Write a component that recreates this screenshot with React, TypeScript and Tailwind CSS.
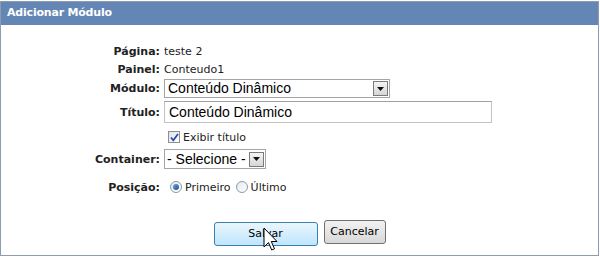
import React from 'react';

const labelCls = "text-right font-bold text-[11px] text-[#222] leading-none";

const DropArrow: React.FC = () => (
  <span className="flex h-[15px] w-[15px] items-center justify-center border border-[#7a7a7a] bg-gradient-to-b from-[#f4f4f4] to-[#d6d6d6]">
    <svg width="7" height="4" viewBox="0 0 7 4">
      <path d="M0 0h7L3.5 4z" fill="#111" />
    </svg>
  </span>
);

const Radio: React.FC<{ checked?: boolean }> = ({ checked }) => (
  <span className="flex h-[12px] w-[12px] items-center justify-center rounded-full border border-[#8c9aa8] bg-gradient-to-br from-[#e6e9ec] to-[#ffffff]">
    {checked && <span className="h-[6px] w-[6px] rounded-full bg-gradient-to-br from-[#6fa0dc] to-[#1d4f9c]" />}
  </span>
);

const Cursor: React.FC = () => (
  <svg className="absolute left-[49px] top-[7px]" width="16" height="25" viewBox="0 0 16 25">
    <path d="M1 1v19l4.5-4.5 3.2 7.5 2.8-1.2-3.2-7.3H14z" fill="#fff" stroke="#000" strokeWidth="1" strokeLinejoin="round" />
  </svg>
);

export default function App() {
  return (
    <div className="h-[257px] w-[600px] bg-white pt-[1px]" style={{ fontFamily: '"DejaVu Sans", Tahoma, sans-serif' }}>
      <div className="h-[255px] w-[599px] border border-[#8d9cb0] bg-white">
        <div className="flex h-[23px] items-center bg-[#6386b4] pl-[6px] text-[11px] font-bold tracking-[-0.2px] text-white">
          Adicionar Módulo
        </div>

        <div className="grid grid-cols-[159px_1fr] items-center gap-x-[4px] pt-[21px]">
          <div className={labelCls}>Página:</div>
          <div className="text-[11px] leading-none text-[#222]">teste 2</div>

          <div className={`${labelCls} mt-[7px]`}>Painel:</div>
          <div className="mt-[7px] text-[11px] leading-none text-[#222]">Conteudo1</div>

          <div className={`${labelCls} mt-[4px]`}>Módulo:</div>
          <div className="mt-[4px] flex h-[19px] w-[226px] items-center justify-between border border-[#a5a5a5] pl-[3px] pr-[1px]">
            <span className="text-[14px] text-black" style={{ fontFamily: '"Liberation Sans", Arial, sans-serif' }}>Conteúdo Dinâmico</span>
            <DropArrow />
          </div>

          <div className={`${labelCls} mt-[3px]`}>Título:</div>
          <div className="mt-[3px] flex h-[22px] w-[328px] items-center border border-[#c3c3c3] border-t-[#a0a0a0] pl-[4px]">
            <span className="text-[14px] text-black" style={{ fontFamily: '"Liberation Sans", Arial, sans-serif' }}>Conteúdo Dinâmico</span>
          </div>

          <div className="mt-[8px]" />
          <div className="mt-[8px] flex items-center gap-[3px] pl-[4px]">
            <span className="flex h-[12px] w-[12px] items-center justify-center border border-[#8e8f8f] bg-gradient-to-br from-[#dfe3e8] to-[#ffffff]">
              <svg width="9" height="9" viewBox="0 0 9 9">
                <path d="M1 4.5l2.3 2.8L8 1" fill="none" stroke="#2a4fa8" strokeWidth="1.8" />
              </svg>
            </span>
            <span className="text-[11px] leading-none text-[#222]">Exibir título</span>
          </div>

          <div className={`${labelCls} mt-[6px]`}>Container:</div>
          <div className="mt-[6px] flex h-[20px] w-[102px] items-center justify-between border border-[#a5a5a5] pl-[2px] pr-[1px]">
            <span className="text-[14px] text-black" style={{ fontFamily: '"Liberation Sans", Arial, sans-serif' }}>- Selecione -</span>
            <DropArrow />
          </div>

          <div className={`${labelCls} mt-[12px]`}>Posição:</div>
          <div className="mt-[12px] flex items-center pl-[6px] text-[11px] leading-none text-[#222]">
            <Radio checked />
            <span className="ml-[3px]">Primeiro</span>
            <span className="ml-[5px]"><Radio /></span>
            <span className="ml-[3px]">Último</span>
          </div>
        </div>

        <div className="mt-[27px] flex justify-center gap-[6px]">
          <div className="relative">
            <button className="h-[24px] w-[104px] rounded-[3px] border border-[#3c7fb1] bg-gradient-to-b from-[#eaf6fd] to-[#bee6fd] text-[11px] text-black">
              Salvar
            </button>
            <Cursor />
          </div>
          <button className="h-[24px] w-[62px] rounded-[3px] border border-[#707070] bg-gradient-to-b from-[#f2f2f2] to-[#d8d8d8] text-[11px] text-black">
            Cancelar
          </button>
        </div>
      </div>
    </div>
  );
}
